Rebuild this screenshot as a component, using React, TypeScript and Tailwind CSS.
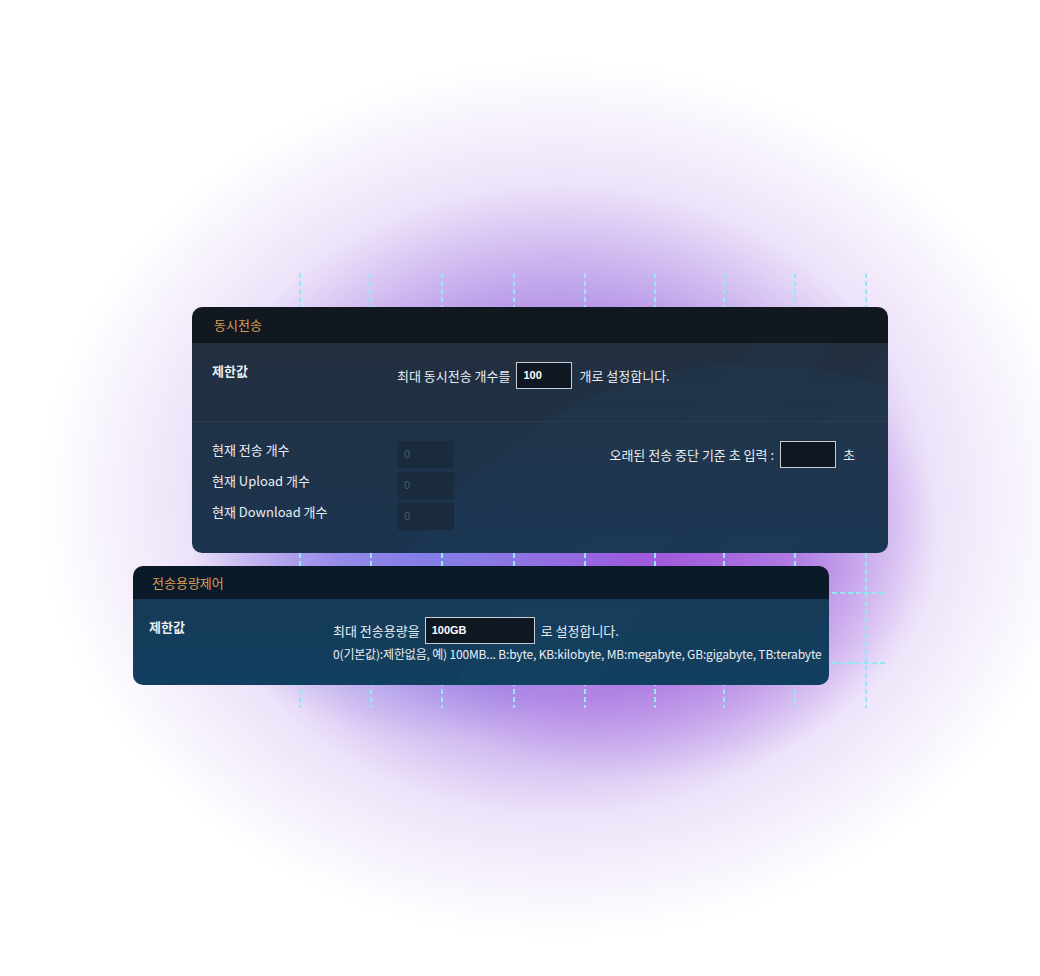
import React from 'react';

const gridX = [300, 371, 442, 514, 585, 655, 724, 795, 866];
const gridY = [593, 663];

const font = { fontFamily: '"Noto Sans CJK KR", "Noto Sans", sans-serif' };

function Grid() {
  return (
    <svg className="absolute inset-0 pointer-events-none" width="1040" height="976">
      {gridX.map((x) => (
        <line key={x} x1={x} y1={273} x2={x} y2={708} stroke="#98e6f4" strokeWidth="2" strokeDasharray="5 3" />
      ))}
      {gridY.map((y) => (
        <line key={y} x1={280} y1={y} x2={888} y2={y} stroke="#98e6f4" strokeWidth="2" strokeDasharray="5 3" />
      ))}
    </svg>
  );
}

function ValueInput({ value, w, dim }: { value: string; w: string; dim?: boolean }) {
  if (dim) {
    return (
      <div className="h-[27px] w-[56px] bg-[#1a2b3d] border border-[#1a2a3a] flex items-center pl-[5px] text-[11px] text-[#4f5d6c] [font-family:'Liberation_Sans',sans-serif]">
        {value}
      </div>
    );
  }
  return (
    <div className={`${w} h-[27px] bg-[#0f1722] border border-[#c9ccd0] flex items-center pl-[6px] text-[11px] font-bold text-white [font-family:'Liberation_Sans',sans-serif]`}>
      {value}
    </div>
  );
}

export default function App() {
  return (
    <div className="relative w-[1040px] h-[976px] overflow-hidden bg-white" style={font}>
      {/* glow */}
      <div className="absolute inset-0 bg-[radial-gradient(ellipse_240px_200px_at_430px_540px,rgba(120,125,232,0.85),rgba(120,125,232,0)_100%),radial-gradient(ellipse_300px_240px_at_640px_540px,rgba(155,70,215,0.8),rgba(155,70,215,0)_100%),radial-gradient(ellipse_520px_440px_at_560px_500px,rgba(170,125,228,1),rgba(182,150,232,0.95)_45%,rgba(222,204,245,0.55)_72%,rgba(255,255,255,0)_100%)]" />
      <Grid />

      <div className="relative flex flex-col pt-[307px] text-[#e9eef3]">
        {/* 동시전송 */}
        <section className="ml-[192px] w-[696px] rounded-[10px] overflow-hidden">
          <header className="h-[36px] bg-[#111820] pl-[22px] flex items-center text-[13px] text-[#d99c52]">동시전송</header>
          <div className="relative bg-gradient-to-b from-[#222f3f] to-[#1b3550]">
            <svg className="absolute inset-0" width="696" height="211">
              <circle cx="560" cy="420" r="400" fill="#1f4066" opacity="0.18" />
              <polygon points="380,211 560,0 640,0 470,211" fill="#2c4058" opacity="0.12" />
              <polygon points="520,211 696,0 696,80 600,211" fill="#2c4058" opacity="0.12" />
            </svg>
            <div className="relative flex h-[78px] pt-[18px] pl-[20px]">
              <div className="w-[185px] leading-[20px] text-[13px] font-bold">제한값</div>
              <div className="mt-[1px] h-[27px] flex items-center text-[13px]">
                <span className="mr-[6px]">최대 동시전송 개수를</span>
                <ValueInput value="100" w="w-[56px]" />
                <span className="ml-[7px]">개로 설정합니다.</span>
              </div>
            </div>
            <div className="relative h-px bg-[#2d3d4f]" />
            <div className="relative flex pt-[19px] pb-[23px] pl-[20px] pr-[33px]">
              <div className="w-[186px] flex flex-col gap-[4px] text-[13px]">
                <div className="h-[27px] leading-[18px]">현재 전송 개수</div>
                <div className="h-[27px] leading-[18px]">현재 Upload 개수</div>
                <div className="h-[27px] leading-[18px]">현재 Download 개수</div>
              </div>
              <div className="flex flex-col gap-[4px]">
                <ValueInput value="0" w="" dim />
                <ValueInput value="0" w="" dim />
                <ValueInput value="0" w="" dim />
              </div>
              <div className="flex-1 flex justify-end items-start">
                <div className="h-[27px] flex items-center text-[13px]">
                  <span className="mr-[6px]">오래된 전송 중단 기준 초 입력 :</span>
                  <ValueInput value="" w="w-[56px]" />
                  <span className="ml-[7px]">초</span>
                </div>
              </div>
            </div>
          </div>
        </section>

        {/* 전송용량제어 */}
        <section className="mt-[13px] ml-[133px] w-[696px] rounded-[10px] overflow-hidden">
          <header className="h-[33px] bg-[#0b1a29] pl-[19px] flex items-center text-[13px] text-[#d99c52]">전송용량제어</header>
          <div className="relative bg-gradient-to-b from-[#163a58] to-[#113f5f] pt-[18px] pb-[22px] pl-[16px] flex">
            <svg className="absolute inset-0" width="696" height="86">
              <polygon points="380,0 520,0 460,86 320,86" fill="#24506f" opacity="0.12" />
            </svg>
            <div className="relative w-[184px] shrink-0 leading-[20px] text-[13px] font-bold">제한값</div>
            <div className="relative flex flex-col">
              <div className="h-[27px] flex items-center text-[13px]">
                <span className="mr-[5px]">최대 전송용량을</span>
                <ValueInput value="100GB" w="w-[110px]" />
                <span className="ml-[6px]">로 설정합니다.</span>
              </div>
              <div className="mt-[1px] leading-[18px] text-[12px] tracking-[-0.17px] whitespace-nowrap">
                0(기본값):제한없음, 예) 100MB... B:byte, KB:kilobyte, MB:megabyte, GB:gigabyte, TB:terabyte
              </div>
            </div>
          </div>
        </section>
      </div>
    </div>
  );
}
